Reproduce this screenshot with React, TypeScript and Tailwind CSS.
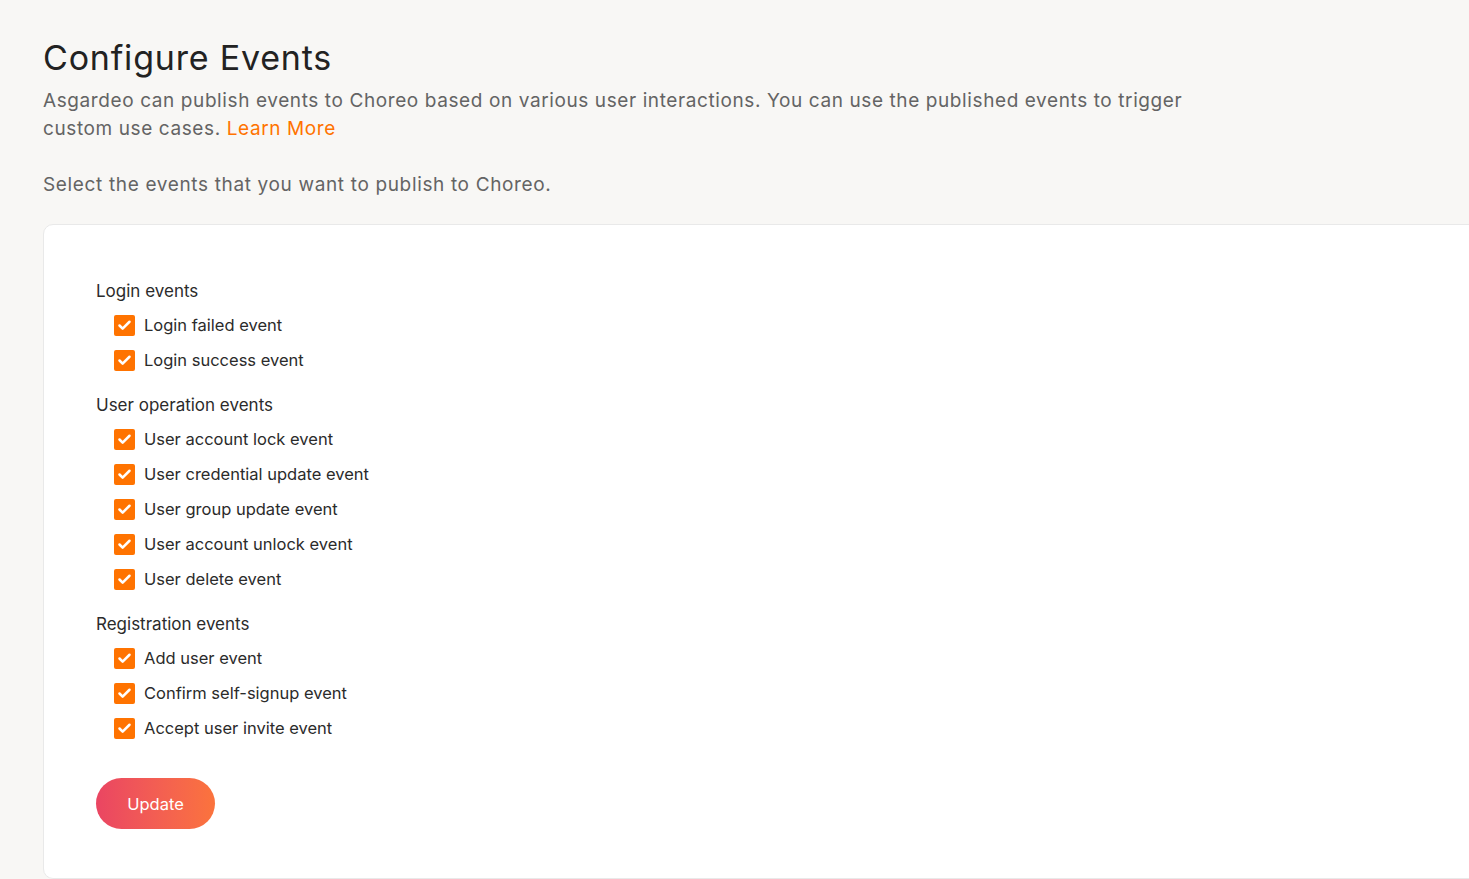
import { Check } from 'lucide-react';

const groups = [
  {
    title: 'Login events',
    events: ['Login failed event', 'Login success event'],
  },
  {
    title: 'User operation events',
    events: [
      'User account lock event',
      'User credential update event',
      'User group update event',
      'User account unlock event',
      'User delete event',
    ],
  },
  {
    title: 'Registration events',
    events: ['Add user event', 'Confirm self-signup event', 'Accept user invite event'],
  },
];

function EventCheckbox({ label }: { label: string }) {
  return (
    <label className="flex items-center h-[35px] pl-[18px] cursor-pointer">
      <span className="w-[21px] h-[21px] rounded-[2px] bg-[#ff7300] flex items-center justify-center">
        <Check className="w-[15px] h-[15px] text-white" strokeWidth={4} />
      </span>
      <span className="ml-[9px] text-[16.5px] text-[#2b2b2b]">{label}</span>
    </label>
  );
}

export default function App() {
  return (
    <div
      className="min-h-[879px] bg-[#f8f7f5] overflow-hidden pl-[43px] pt-[37px]"
      style={{ fontFamily: 'Inter, "Noto Sans", sans-serif' }}
    >
      <h1 className="text-[34px] leading-[42px] text-[#222222] tracking-[0.8px]">Configure Events</h1>
      <p className="mt-[8px] text-[19px] leading-[28px] text-[#646464] tracking-[0.6px] max-w-[1150px]">
        Asgardeo can publish events to Choreo based on various user interactions. You can use the published events to
        trigger custom use cases. <span className="text-[#ff7300] cursor-pointer">Learn More</span>
      </p>
      <p className="mt-[28px] text-[19px] leading-[28px] text-[#646464] tracking-[0.65px]">
        Select the events that you want to publish to Choreo.
      </p>

      <div className="mt-[25px] bg-white border border-[#e9e9e9] rounded-[10px] w-[1480px] h-[655px] pl-[52px] pt-[43px]">
        {groups.map((g) => (
          <div key={g.title} className="mb-[4px]">
            <div className="h-[40px] flex items-end pb-[4px] text-[17px] text-[#2b2b2b]">{g.title}</div>
            {g.events.map((e) => (
              <EventCheckbox key={e} label={e} />
            ))}
          </div>
        ))}
        <button className="mt-[28px] w-[119px] h-[51px] rounded-full bg-gradient-to-r from-[#ea4562] to-[#fb733c] text-white text-[16.5px] pt-[2px]">
          Update
        </button>
      </div>
    </div>
  );
}
